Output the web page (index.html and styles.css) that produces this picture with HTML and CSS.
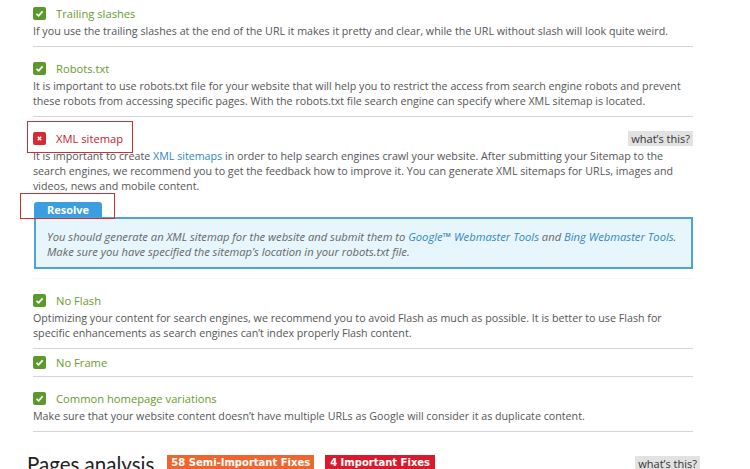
FILE: index.html
```html
<!DOCTYPE html>
<html>
<head>
<meta charset="utf-8">
<link rel="stylesheet" href="styles.css">
</head>
<body>
<div class="page">
  <div class="item">
    <div class="title"><span class="chk ok"><svg viewBox="0 0 13 13"><path d="M3.5 6.8 L5.6 8.8 L9.6 4.4" fill="none" stroke="#fff" stroke-width="1.8"/></svg></span><span class="tt">Trailing slashes</span></div>
    <p class="desc">If you use the trailing slashes at the end of the URL it makes it pretty and clear, while the URL without slash will look quite weird.</p>
  </div>
  <div class="item">
    <div class="title"><span class="chk ok"><svg viewBox="0 0 13 13"><path d="M3.5 6.8 L5.6 8.8 L9.6 4.4" fill="none" stroke="#fff" stroke-width="1.8"/></svg></span><span class="tt">Robots.txt</span></div>
    <p class="desc">It is important to use robots.txt file for your website that will help you to restrict the access from search engine robots and prevent these robots from accessing specific pages. With the robots.txt file search engine can specify where XML sitemap is located.</p>
  </div>
  <div class="item fail">
    <div class="title"><span class="chk bad"><svg viewBox="0 0 13 13"><path d="M4.8 4.8 L8.2 8.2 M8.2 4.8 L4.8 8.2" fill="none" stroke="#fff" stroke-width="1.5"/></svg></span><span class="tt bad-t">XML sitemap</span><span class="mark mark-title"></span><span class="what">what’s this?</span></div>
    <p class="desc">It is important to create <a>XML sitemaps</a> in order to help search engines crawl your website. After submitting your Sitemap to the search engines, we recommend you to get the feedback how to improve it. You can generate XML sitemaps for URLs, images and videos, news and mobile content.</p>
    <div class="resolve-wrap"><span class="resolve">Resolve</span><span class="mark mark-btn"></span></div>
    <div class="infobox">You should generate an XML sitemap for the website and submit them to <a>Google™ Webmaster Tools</a> and <a>Bing Webmaster Tools</a>.<br>Make sure you have specified the sitemap’s location in your robots.txt file.</div>
  </div>
  <div class="item">
    <div class="title"><span class="chk ok"><svg viewBox="0 0 13 13"><path d="M3.5 6.8 L5.6 8.8 L9.6 4.4" fill="none" stroke="#fff" stroke-width="1.8"/></svg></span><span class="tt">No Flash</span></div>
    <p class="desc">Optimizing your content for search engines, we recommend you to avoid Flash as much as possible. It is better to use Flash for specific enhancements as search engines can’t index properly Flash content.</p>
  </div>
  <div class="item short">
    <div class="title"><span class="chk ok"><svg viewBox="0 0 13 13"><path d="M3.5 6.8 L5.6 8.8 L9.6 4.4" fill="none" stroke="#fff" stroke-width="1.8"/></svg></span><span class="tt">No Frame</span></div>
  </div>
  <div class="item">
    <div class="title"><span class="chk ok"><svg viewBox="0 0 13 13"><path d="M3.5 6.8 L5.6 8.8 L9.6 4.4" fill="none" stroke="#fff" stroke-width="1.8"/></svg></span><span class="tt">Common homepage variations</span></div>
    <p class="desc">Make sure that your website content doesn’t have multiple URLs as Google will consider it as duplicate content.</p>
  </div>
  <div class="section">
    <h2>Pages analysis</h2>
    <span class="badge orange">58 Semi-Important Fixes</span>
    <span class="badge red">4 Important Fixes</span>
    <span class="what what-sec">what’s this?</span>
  </div>
</div>
</body>
</html>
```

FILE: styles.css
```css
html, body { margin: 0; padding: 0; background: #fff; }
body { font-family: "Open Sans", "Noto Sans", sans-serif; color: #555; overflow: hidden; }
.page { width: 660px; margin-left: 33px; }
.item { border-bottom: 1px solid #d4d4d4; padding: 12px 0 7px; }
.item:first-child { padding-top: 4px; }
.item.fail { border-bottom-color: #f6f6f6; padding-bottom: 9px; }
.item.short { padding: 4px 0 3px; }
.title { position: relative; display: flex; align-items: center; height: 19px; margin-bottom: 1px; }
.chk { width: 13px; height: 13px; border-radius: 2px; display: inline-flex; }
.chk svg { width: 13px; height: 13px; }
.chk.ok { background: #5b9a2a; }
.chk.bad { background: #d42a35; }
.tt { margin-left: 10px; font-size: 11.2px; line-height: 15px; color: #6a9a2b; }
.tt.bad-t { color: #c8202c; }
.desc { margin: 0; font-size: 10.7px; line-height: 15px; color: #555; }
.desc a { color: #2f86c4; }
.what { margin-left: auto; background: #e2e2e2; color: #333; font-size: 11px; line-height: 15px; padding: 0 3px; }
.mark { position: absolute; border: 1px solid #c4323a; pointer-events: none; }
.mark-title { left: -6px; top: -8px; width: 104px; height: 30px; }
.resolve-wrap { position: relative; display: flex; margin-top: 8px; height: 15px; }
.resolve { display: block; margin-left: 1px; width: 68px; height: 15px; line-height: 15px; background: #3a9edf; color: #fff; font-weight: bold; font-size: 11px; text-align: center; border-radius: 3px 3px 0 0; }
.mark-btn { left: -13px; top: -9px; width: 93px; height: 24px; }
.infobox { margin-left: 1px; border: 2px solid #4ea3d2; background: #e7f5fc; padding: 10px 10px 8px 11px; height: 30px; font-style: italic; font-size: 11.2px; line-height: 15px; color: #666; }
.infobox a { color: #3088c4; }
.section { display: flex; align-items: flex-start; margin-left: -6px; margin-top: 19px; height: 26px; }
h2 { margin: 0; font-weight: normal; font-size: 20.5px; line-height: 26px; color: #222; font-family: "Lato", "Open Sans", sans-serif; }
.badge { font-family: "DejaVu Sans", Verdana, sans-serif; font-weight: bold; color: #fff; font-size: 10px; line-height: 14px; padding: 1px 4px 4px; margin-left: 11px; margin-top: 4px; }
.badge.orange { background: #f0652d; margin-left: 13px; }
.badge.red { background: #d91a2a; padding: 1px 5px 4px; }
.what-sec { margin-right: -7px; margin-top: 5px; }
```
